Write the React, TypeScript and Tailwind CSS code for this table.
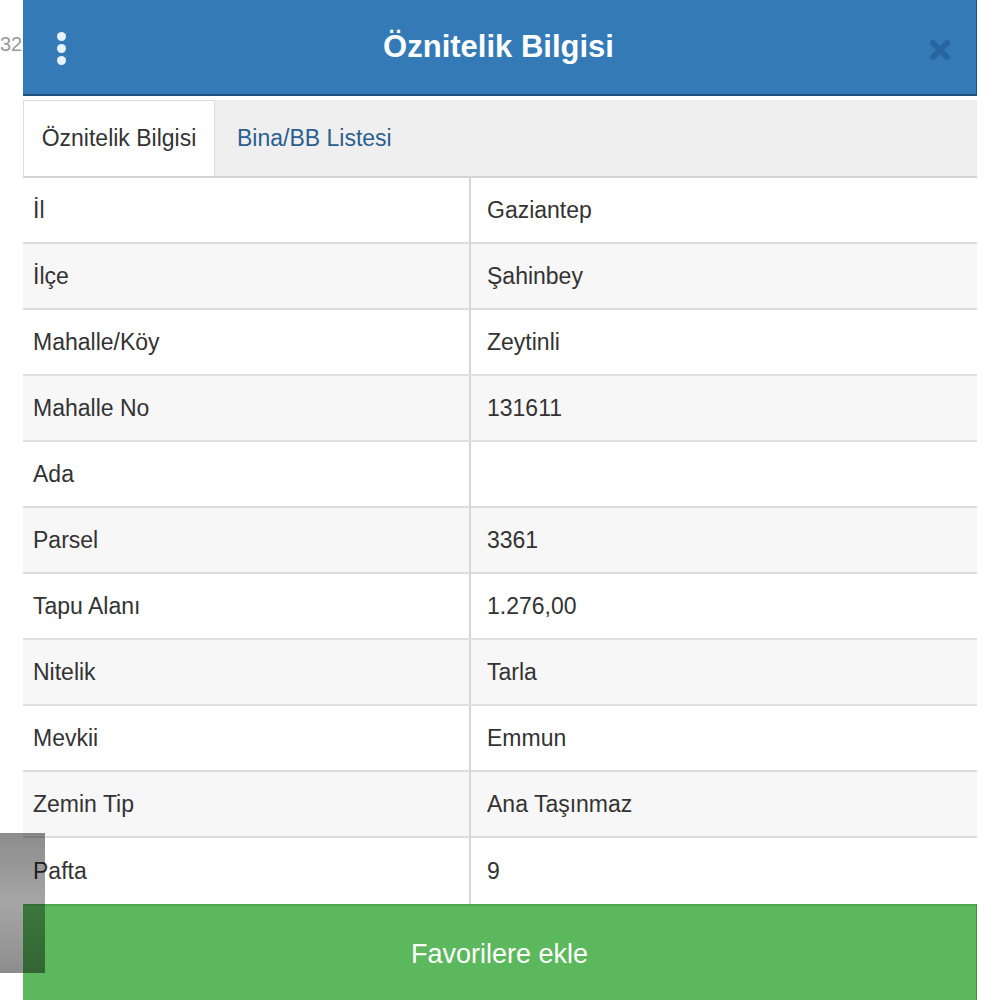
import React from 'react';

const rows = [
  { label: 'İl', value: 'Gaziantep' },
  { label: 'İlçe', value: 'Şahinbey' },
  { label: 'Mahalle/Köy', value: 'Zeytinli' },
  { label: 'Mahalle No', value: '131611' },
  { label: 'Ada', value: '' },
  { label: 'Parsel', value: '3361' },
  { label: 'Tapu Alanı', value: '1.276,00' },
  { label: 'Nitelik', value: 'Tarla' },
  { label: 'Mevkii', value: 'Emmun' },
  { label: 'Zemin Tip', value: 'Ana Taşınmaz' },
  { label: 'Pafta', value: '9' },
];

export default function App() {
  return (
    <div className="relative w-[1000px] h-[1000px] overflow-hidden bg-white font-['Liberation_Sans',Arial,sans-serif] text-[#333]">
      {/* number from the page behind */}
      <div className="absolute left-0 top-[34px] text-[20px] leading-none text-[#9a9a9a]">32</div>

      <div className="ml-[23px] w-[954px] flex flex-col">
        <div className="h-[96px] bg-[#337ab7] border-b-2 border-r border-[#1e4f7d] flex items-center pl-[30px] pr-[24px]">
          <div className="flex flex-col gap-[3px] w-[16px] items-center pt-[3px]">
            <span className="w-[9px] h-[9px] rounded-full bg-[#e8f2fb]" />
            <span className="w-[9px] h-[9px] rounded-full bg-[#e8f2fb]" />
            <span className="w-[9px] h-[9px] rounded-full bg-[#e8f2fb]" />
          </div>
          <div className="flex-1 text-center text-white text-[31px] font-bold">
            Öznitelik Bilgisi
          </div>
          <svg width="24" height="24" viewBox="0 0 24 24" className="mt-[6px]">
            <path d="M5 5 L19 19 M19 5 L5 19" stroke="#2766a0" strokeWidth="6" strokeLinecap="round" />
          </svg>
        </div>

        <div className="mt-[4px] h-[78px] bg-[#efefef] border-b-2 border-[#d4d4d4] flex items-end">
          <div className="h-[76px] w-[192px] bg-white border border-b-0 border-[#dcdcdc] flex items-center justify-center text-[23px] text-[#333]">
            Öznitelik Bilgisi
          </div>
          <div className="h-[76px] px-[22px] flex items-center text-[23px] text-[#2b5f8e]">
            Bina/BB Listesi
          </div>
        </div>

        <div className="flex flex-col">
          {rows.map((r, i) => (
            <div
              key={r.label}
              className={`flex h-[66px] text-[23px] ${i % 2 === 1 ? 'bg-[#f7f7f7]' : 'bg-white'} ${
                i < rows.length - 1 ? 'border-b-2 border-[#dedede]' : ''
              }`}
            >
              <div className="w-[448px] border-r-2 border-[#d6d6d6] flex items-center pl-[10px]">
                {r.label}
              </div>
              <div className="flex-1 flex items-center pl-[16px]">{r.value}</div>
            </div>
          ))}
        </div>

        <div className="h-[98px] bg-[#5cb85c] border-t-2 border-[#4fa84f] border-r border-r-[#3e8e3e] flex items-center justify-center text-white text-[27px]">
          Favorilere ekle
        </div>
      </div>

      <div className="absolute left-0 top-[833px] w-[45px] h-[140px] bg-gradient-to-b from-black/45 via-black/35 to-black/45" />
    </div>
  );
}
